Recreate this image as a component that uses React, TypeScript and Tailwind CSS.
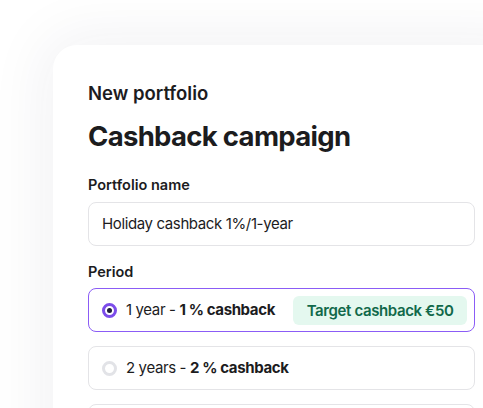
export default function App() {
  return (
    <div
      className="h-[408px] w-[483px] overflow-hidden bg-white pl-[53px] pt-[45px]"
      style={{ fontFamily: "Inter, 'Noto Sans', sans-serif" }}
    >
      <div className="w-[470px] rounded-tl-[24px] bg-white pb-10 pl-[35px] pr-[48px] pt-[36px] shadow-[0_0_60px_10px_rgba(30,30,60,0.06)]">
        <h2 className="text-[18.5px] font-semibold leading-6 text-[#1c1c1e]">New portfolio</h2>
        <h1 className="mt-[13px] text-[27.5px] font-bold leading-9 tracking-tight text-[#1c1c1e]">
          Cashback campaign
        </h1>

        <label className="mt-[21px] block text-[14.5px] font-semibold leading-5 text-[#1c1c1e]">
          Portfolio name
        </label>
        <div className="mt-[7px] flex h-[44px] items-center rounded-lg border border-[#e4e4e7] px-[13px] text-[15px] tracking-tight text-[#1c1c1e]">
          Holiday cashback 1%/1-year
        </div>

        <label className="mt-[16px] block text-[14.5px] font-semibold leading-5 text-[#1c1c1e]">
          Period
        </label>
        <div className="mt-[6px] flex flex-col gap-[14px]">
          <div className="flex h-[44px] items-center rounded-lg border-[1.5px] border-[#8b5cf6] pl-[13px] pr-[7px] text-[15px] tracking-tight text-[#1c1c1e]">
            <span className="flex h-[15px] w-[15px] items-center justify-center rounded-full border-[3.5px] border-[#7c4dea]">
              <span className="h-[5px] w-[5px] rounded-full bg-[#1c1c3a]" />
            </span>
            <span className="ml-[9px]">
              1 year - <b className="font-bold">1 % cashback</b>
            </span>
            <span className="ml-auto rounded-md bg-[#e4f8ef] px-[13.5px] py-[4px] text-[15px] font-semibold leading-[21px] text-[#11694a]">
              Target cashback €50
            </span>
          </div>
          <div className="flex h-[44px] items-center rounded-lg border border-[#e4e4e7] pl-[13px] text-[15px] tracking-tight text-[#1c1c1e]">
            <span className="h-[15px] w-[15px] rounded-full border-[3px] border-[#e2e3e7]" />
            <span className="ml-[9px]">
              2 years - <b className="font-bold">2 % cashback</b>
            </span>
          </div>
          <div className="flex h-[44px] items-center rounded-lg border border-[#e4e4e7] pl-[13px] text-[15px] tracking-tight text-[#1c1c1e]">
            <span className="h-[15px] w-[15px] rounded-full border-[3px] border-[#e2e3e7]" />
            <span className="ml-[9px]">
              3 years - <b className="font-bold">3 % cashback</b>
            </span>
          </div>
        </div>
      </div>
    </div>
  );
}
